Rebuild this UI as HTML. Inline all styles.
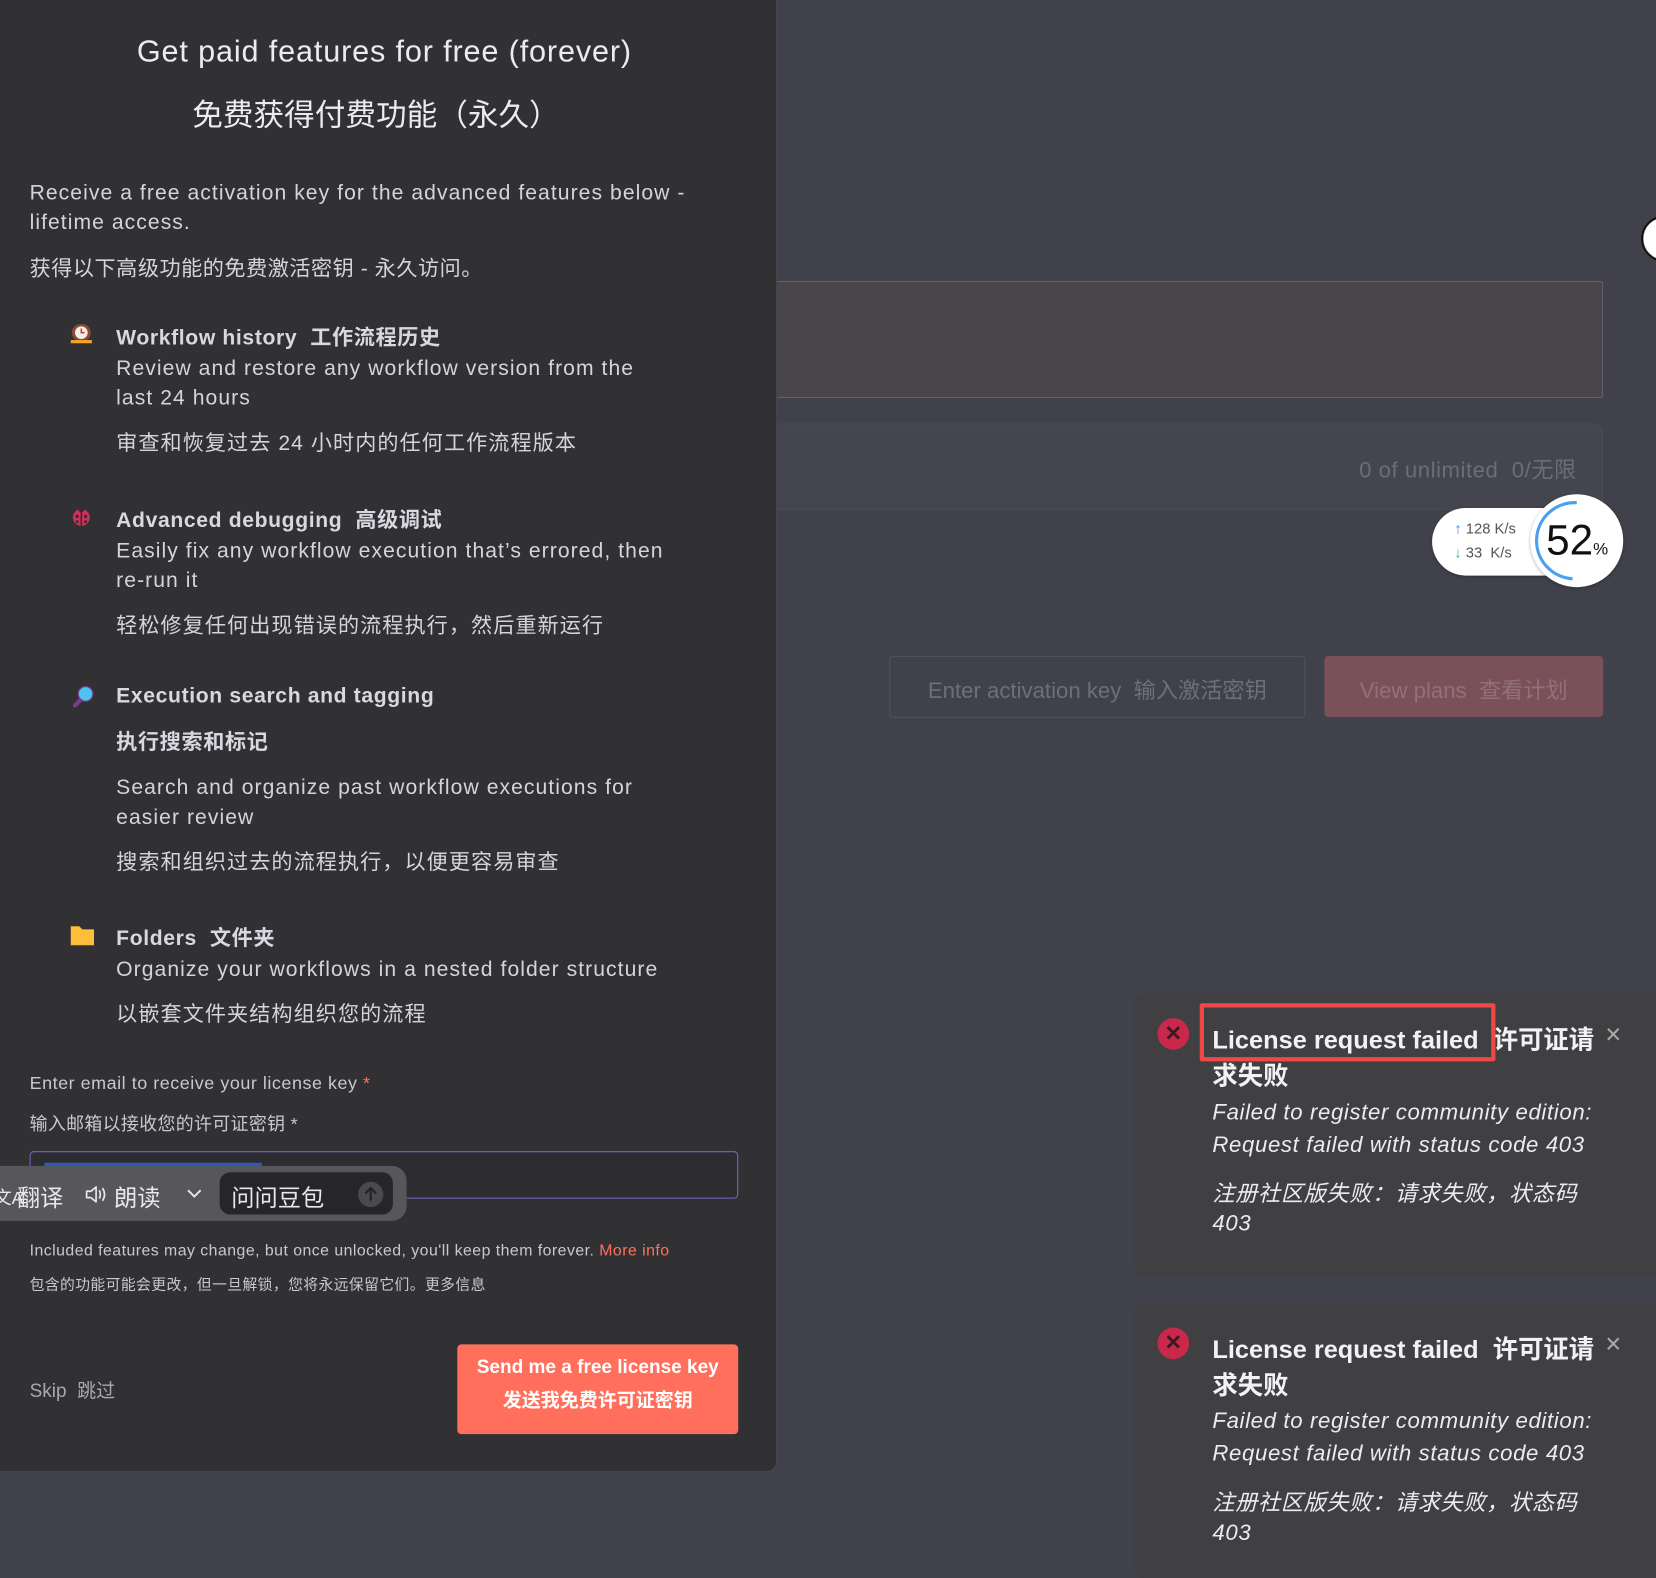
<!DOCTYPE html>
<html><head><meta charset="utf-8">
<style>
html,body{margin:0;padding:0;width:1656px;height:1559px;overflow:hidden;background:#41414b;}
#root{position:absolute;left:0;top:0;width:1568px;height:1476px;transform:scale(1.0561);transform-origin:0 0;font-family:"Liberation Sans","Noto Sans CJK SC",sans-serif;}
.a{position:absolute;white-space:nowrap;}
.panel{position:absolute;left:0;top:0;width:735px;height:1393px;background:#313134;border-right:1px solid #4a4a50;border-bottom:1px solid #4a4a50;border-bottom-right-radius:10px;}
.t{color:#d4d4dc;font-size:20px;letter-spacing:1px;}
.b{color:#d8d8e0;font-size:20px;font-weight:bold;letter-spacing:0.6px;}
.toast{position:absolute;left:1074px;width:500px;background:#404043;border-radius:8px;}
.tt{color:#f2f2f4;font-size:24px;font-weight:bold;}
.ti{color:#ececef;font-size:21px;font-style:italic;letter-spacing:0.6px;}
</style></head><body><div id="root">
<div class="panel"></div>
<div class="a" style="left:0;width:728px;text-align:center;top:33px;font-size:29px;color:#ececf0;letter-spacing:0.8px;">Get paid features for free (forever)</div>
<div class="a" style="left:0;width:712px;text-align:center;top:86px;font-size:29px;color:#ececf0;">免费获得付费功能（永久）</div>
<div class="a t" style="left:28px;top:172px;">Receive a free activation key for the advanced features below -</div>
<div class="a t" style="left:28px;top:200px;">lifetime access.</div>
<div class="a t" style="left:28px;top:238px;letter-spacing:0.5px;">获得以下高级功能的免费激活密钥 - 永久访问。</div>

<svg class="a" style="left:66px;top:304px" width="22" height="22" viewBox="0 0 22 22"><rect x="2" y="3" width="18" height="16" rx="8" fill="#8a4a3a"/><circle cx="11" cy="11" r="6" fill="#f2efe8"/><path d="M11 7v4h3" stroke="#c33" stroke-width="1.4" fill="none"/><rect x="1" y="18" width="20" height="3" fill="#f5a623"/></svg>
<div class="a b" style="left:110px;top:303px;">Workflow history&nbsp; 工作流程历史</div>
<div class="a t" style="left:110px;top:338px;">Review and restore any workflow version from the</div>
<div class="a t" style="left:110px;top:366px;">last 24 hours</div>
<div class="a t" style="left:110px;top:403px;">审查和恢复过去 24 小时内的任何工作流程版本</div>

<svg class="a" style="left:66px;top:477px" width="22" height="22" viewBox="0 0 22 22"><circle cx="11" cy="13" r="8" fill="#d0305a"/><circle cx="11" cy="5" r="3" fill="#3a2a3a"/><path d="M11 6v15" stroke="#3a2a3a" stroke-width="1.5"/><circle cx="7" cy="12" r="1.6" fill="#3a2a3a"/><circle cx="15" cy="12" r="1.6" fill="#3a2a3a"/><circle cx="7" cy="17" r="1.4" fill="#3a2a3a"/><circle cx="15" cy="17" r="1.4" fill="#3a2a3a"/></svg>
<div class="a b" style="left:110px;top:476px;">Advanced debugging&nbsp; 高级调试</div>
<div class="a t" style="left:110px;top:511px;">Easily fix any workflow execution that’s errored, then</div>
<div class="a t" style="left:110px;top:539px;">re-run it</div>
<div class="a t" style="left:110px;top:576px;">轻松修复任何出现错误的流程执行，然后重新运行</div>

<svg class="a" style="left:66px;top:648px" width="24" height="24" viewBox="0 0 24 24"><path d="M5 20l6-6" stroke="#7a3a8a" stroke-width="4" stroke-linecap="round"/><circle cx="15" cy="9" r="7" fill="#4fc3f0" stroke="#6a3a8a" stroke-width="1.3"/></svg>
<div class="a b" style="left:110px;top:648px;">Execution search and tagging</div>
<div class="a b" style="left:110px;top:686px;">执行搜索和标记</div>
<div class="a t" style="left:110px;top:735px;">Search and organize past workflow executions for</div>
<div class="a t" style="left:110px;top:763px;">easier review</div>
<div class="a t" style="left:110px;top:800px;">搜索和组织过去的流程执行，以便更容易审查</div>

<svg class="a" style="left:66px;top:874px" width="24" height="22" viewBox="0 0 24 22"><path d="M1 3h8l3 3h11v15H1z" fill="#fdbf3a"/></svg>
<div class="a b" style="left:110px;top:872px;">Folders&nbsp; 文件夹</div>
<div class="a t" style="left:110px;top:907px;">Organize your workflows in a nested folder structure</div>
<div class="a t" style="left:110px;top:944px;">以嵌套文件夹结构组织您的流程</div>

<div class="a" style="left:28px;top:1016px;font-size:17px;color:#c8c8d0;letter-spacing:0.5px;">Enter email to receive your license key <span style="color:#ff6f5c">*</span></div>
<div class="a" style="left:28px;top:1050px;font-size:17px;color:#c8c8d0;letter-spacing:0.3px;">输入邮箱以接收您的许可证密钥 *</div>
<div class="a" style="left:28px;top:1090px;width:669px;height:43px;border:1px solid #7a62c8;border-radius:4px;background:#2d2d31;"></div>
<div class="a" style="left:42px;top:1101px;width:206px;height:3px;background:#2c5ac8;"></div>
<div class="a" style="left:0;top:1104px;width:385px;height:52px;background:#575759;border-radius:0 14px 14px 0;"></div>
<div class="a" style="left:-6px;top:1120px;font-size:17px;color:#e8e8ea;">文A</div>
<div class="a" style="left:16px;top:1117px;font-size:22px;color:#e8e8ea;">翻译</div>
<svg class="a" style="left:80px;top:1121px" width="22" height="20" viewBox="0 0 22 20"><path d="M2 7h4l5-4v14l-5-4H2z" fill="none" stroke="#e8e8ea" stroke-width="1.6" stroke-linejoin="round"/><path d="M14 6q2 4 0 8M17 4q4 6 0 12" fill="none" stroke="#e8e8ea" stroke-width="1.6"/></svg>
<div class="a" style="left:108px;top:1117px;font-size:22px;color:#e8e8ea;">朗读</div>
<svg class="a" style="left:176px;top:1124px" width="16" height="12" viewBox="0 0 16 12"><path d="M2 3l6 6 6-6" fill="none" stroke="#e8e8ea" stroke-width="1.8"/></svg>
<div class="a" style="left:208px;top:1110px;width:164px;height:40px;background:#262629;border-radius:10px;"></div>
<div class="a" style="left:219px;top:1117px;font-size:22px;color:#e8e8ea;">问问豆包</div>
<div class="a" style="left:339px;top:1119px;width:24px;height:24px;border-radius:50%;background:#4a4a4e;"></div>
<svg class="a" style="left:339px;top:1119px" width="24" height="24" viewBox="0 0 24 24"><path d="M12 18V6M7 11l5-5 5 5" fill="none" stroke="#222" stroke-width="2"/></svg>

<div class="a" style="left:28px;top:1176px;font-size:15px;color:#c8c8d0;letter-spacing:0.45px;">Included features may change, but once unlocked, you'll keep them forever. <span style="color:#ff6f5c">More info</span></div>
<div class="a" style="left:28px;top:1206px;font-size:14px;color:#c8c8d0;letter-spacing:0.4px;">包含的功能可能会更改，但一旦解锁，您将永远保留它们。更多信息</div>
<div class="a" style="left:28px;top:1303px;font-size:18px;color:#a8a8b4;">Skip&nbsp; 跳过</div>
<div class="a" style="left:433px;top:1273px;width:266px;height:85px;background:#ff6f5c;border-radius:4px;"></div>
<div class="a" style="left:433px;width:266px;text-align:center;top:1284px;font-size:18px;color:#fff;font-weight:bold;">Send me a free license key</div>
<div class="a" style="left:433px;width:266px;text-align:center;top:1312px;font-size:18px;color:#fff;font-weight:bold;">发送我免费许可证密钥</div>

<div class="a" style="left:736px;top:266px;width:781px;height:109px;background:#4a454b;border:1px solid #66636a;border-left:none;border-radius:0 3px 3px 0;"></div>
<div class="a" style="left:736px;top:401px;width:781px;height:80px;background:#45454f;border:1px solid #4c4c58;border-left:none;border-radius:0 10px 10px 0;"></div>
<div class="a" style="left:1180px;width:313px;text-align:right;top:429px;font-size:21px;color:#6c6c7a;letter-spacing:0.5px;">0 of unlimited&nbsp; 0/无限</div>

<div class="a" style="left:1356px;top:481px;width:150px;height:64px;background:#fff;border-radius:32px;box-shadow:0 1px 3px rgba(0,0,0,.3);"></div>
<div class="a" style="left:1377px;top:492px;font-size:14px;color:#555;"><span style="color:#2a8af0;font-weight:bold">↑</span> 128 K/s</div>
<div class="a" style="left:1377px;top:515px;font-size:14px;color:#555;"><span style="color:#2ac060;font-weight:bold">↓</span> 33&nbsp; K/s</div>
<div class="a" style="left:1449px;top:468px;width:88px;height:88px;border-radius:50%;background:#fff;box-shadow:0 1px 3px rgba(0,0,0,.3);"></div>
<svg class="a" style="left:1449px;top:468px" width="88" height="88"><path d="M44 8 A36 36 0 0 0 40 80" stroke="#4aa0f0" stroke-width="3" fill="none"/></svg>
<div class="a" style="left:1464px;top:490px;font-size:40px;color:#111;">52<span style="font-size:16px">%</span></div>
<div class="a" style="left:1554px;top:204px;width:40px;height:40px;border-radius:50%;background:#fff;border:2px solid #111;"></div>

<div class="a" style="left:842px;top:621px;width:392px;height:57px;border:1px solid #525260;border-radius:4px;"></div>
<div class="a" style="left:842px;width:394px;text-align:center;top:638px;font-size:21px;color:#6e6e7c;">Enter activation key&nbsp; 输入激活密钥</div>
<div class="a" style="left:1254px;top:621px;width:264px;height:58px;background:#7a5159;border-radius:4px;"></div>
<div class="a" style="left:1254px;width:264px;text-align:center;top:638px;font-size:21px;color:#93707a;">View plans&nbsp; 查看计划</div>

<div class="toast" style="top:941px;height:267px;"></div>
<div class="toast" style="top:1234px;height:260px;"></div>

<div class="a" style="left:1096px;top:964px;width:30px;height:30px;border-radius:50%;background:#c8284a;color:#3a1a20;font-size:20px;text-align:center;line-height:30px;font-weight:bold;">✕</div>
<div class="a tt" style="left:1148px;top:965px;">License request failed&nbsp; 许可证请</div>
<div class="a tt" style="left:1148px;top:999px;">求失败</div>
<div class="a" style="left:1136px;top:950px;width:272px;height:47px;border:4px solid #f04848;border-radius:2px;"></div>
<div class="a" style="left:1520px;top:964px;font-size:26px;color:#aaa;">×</div>
<div class="a ti" style="left:1148px;top:1042px;">Failed to register community edition:</div>
<div class="a ti" style="left:1148px;top:1073px;">Request failed with status code 403</div>
<div class="a ti" style="left:1148px;top:1114px;">注册社区版失败：请求失败，状态码</div>
<div class="a ti" style="left:1148px;top:1147px;">403</div>

<div class="a" style="left:1096px;top:1257px;width:30px;height:30px;border-radius:50%;background:#c8284a;color:#3a1a20;font-size:20px;text-align:center;line-height:30px;font-weight:bold;">✕</div>
<div class="a tt" style="left:1148px;top:1258px;">License request failed&nbsp; 许可证请</div>
<div class="a tt" style="left:1148px;top:1292px;">求失败</div>
<div class="a" style="left:1520px;top:1257px;font-size:26px;color:#aaa;">×</div>
<div class="a ti" style="left:1148px;top:1334px;">Failed to register community edition:</div>
<div class="a ti" style="left:1148px;top:1365px;">Request failed with status code 403</div>
<div class="a ti" style="left:1148px;top:1407px;">注册社区版失败：请求失败，状态码</div>
<div class="a ti" style="left:1148px;top:1440px;">403</div>
</div></body></html>
